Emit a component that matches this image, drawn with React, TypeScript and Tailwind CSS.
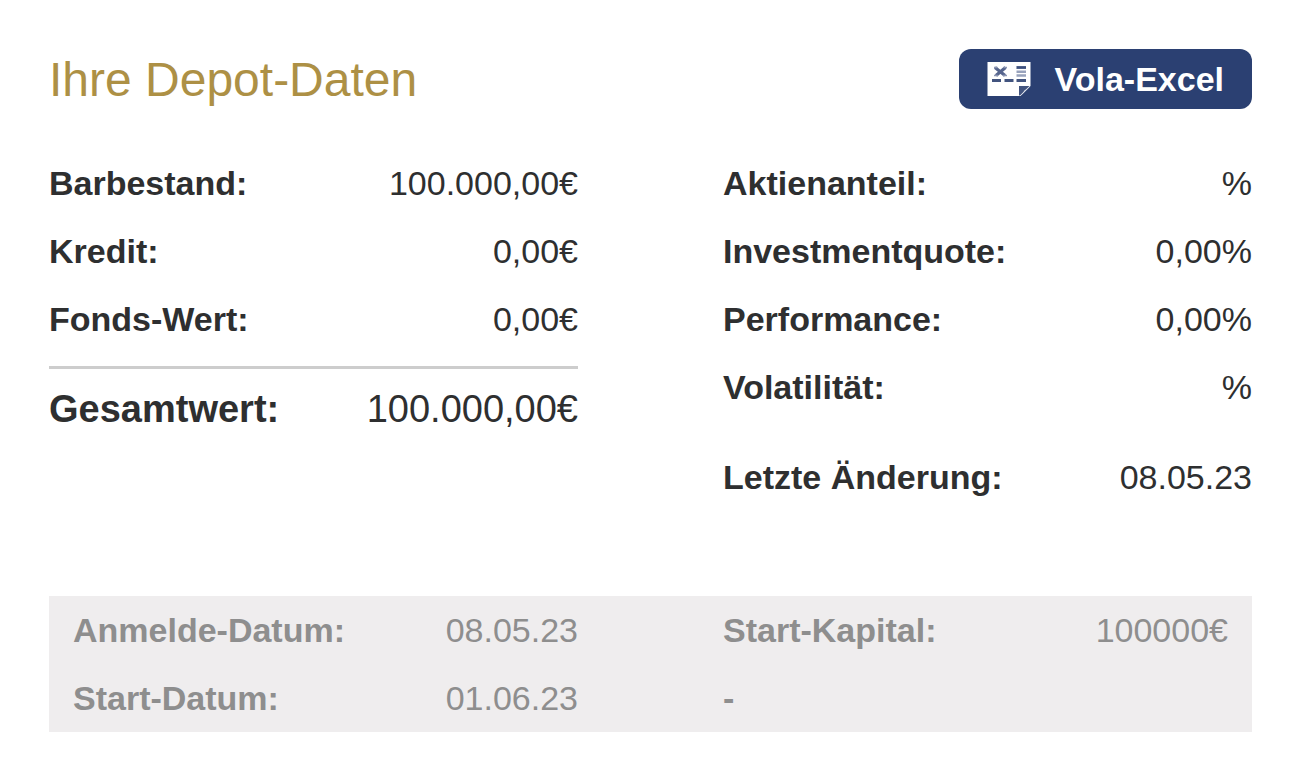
import React from "react";

type RowProps = { label: string; value?: string; className?: string };

function Row({ label, value, className = "h-[68px]" }: RowProps) {
  return (
    <div className={`flex items-center justify-between whitespace-nowrap ${className}`}>
      <dt className="font-bold">{label}</dt>
      <dd>{value}</dd>
    </div>
  );
}

function ExcelIcon() {
  return (
    <svg aria-hidden="true" viewBox="0 0 44 34" className="h-[34px] w-[44px] shrink-0">
      <path d="M0.5 0H43.5V24L33.5 34H0.5Z" fill="#fff" />
      <path d="M8 5.500L18 13.500M18.500 5.500L9 13.500" stroke="#56658e" strokeWidth="3.2" fill="none" />
      <path d="M7 5.500H10.500M16.500 5.500H20M7 13.500H11M16 13.500H20" stroke="#8a95b2" strokeWidth="1.600" />
      <path d="M29.500 5.500H39" stroke="#3c4f7d" strokeWidth="2.8" />
      <path d="M29.500 9.800H39M29.500 13.500H39" stroke="#98a2bc" strokeWidth="2.4" />
      <path d="M5 18.500H14M17.500 18.500H26.500M29.500 18.500H39" stroke="#42547f" strokeWidth="3.2" />
      <path d="M32 24H42.500L33 33.500H32Z" fill="#42547f" />
      <path d="M37.500 28.500L43 24.500L34.500 33Z" fill="#dde1ea" />
    </svg>
  );
}

export default function App() {
  return (
    <main className="bg-white pt-[49px] pr-12 pb-12 pl-[49px] font-['Liberation_Sans',Arial,sans-serif] text-[34px] leading-10 text-[#2e2f30]">
      <header className="flex items-center justify-between">
        <h1 className="pt-0.5 text-5xl text-[#ad9045]">Ihre Depot-Daten</h1>
        <button
          type="button"
          className="flex h-[60px] items-center gap-6 rounded-xl bg-[#2b4072] px-7 font-bold text-white"
        >
          <ExcelIcon />
          Vola-Excel
        </button>
      </header>

      <div className="mt-10 grid grid-cols-2 items-start gap-x-[145px]">
        <dl>
          <Row label="Barbestand:" value="100.000,00€" />
          <Row label="Kredit:" value="0,00€" />
          <Row label="Fonds-Wert:" value="0,00€" />
          <Row
            label="Gesamtwert:"
            value="100.000,00€"
            className="mt-[13px] h-[83px] border-t-3 border-[#cdcdcd] text-[38px]"
          />
        </dl>
        <dl>
          <Row label="Aktienanteil:" value="%" />
          <Row label="Investmentquote:" value="0,00%" />
          <Row label="Performance:" value="0,00%" />
          <Row label="Volatilität:" value="%" />
          <Row label="Letzte Änderung:" value="08.05.23" className="mt-[22px] h-[68px]" />
        </dl>
      </div>

      <div className="mt-[85px] grid grid-cols-2 gap-x-[145px] bg-[#efedee] px-6 text-[#8e8e8e]">
        <dl>
          <Row label="Anmelde-Datum:" value="08.05.23" />
          <Row label="Start-Datum:" value="01.06.23" />
        </dl>
        <dl>
          <Row label="Start-Kapital:" value="100000€" />
          <Row label="-" />
        </dl>
      </div>
    </main>
  );
}
